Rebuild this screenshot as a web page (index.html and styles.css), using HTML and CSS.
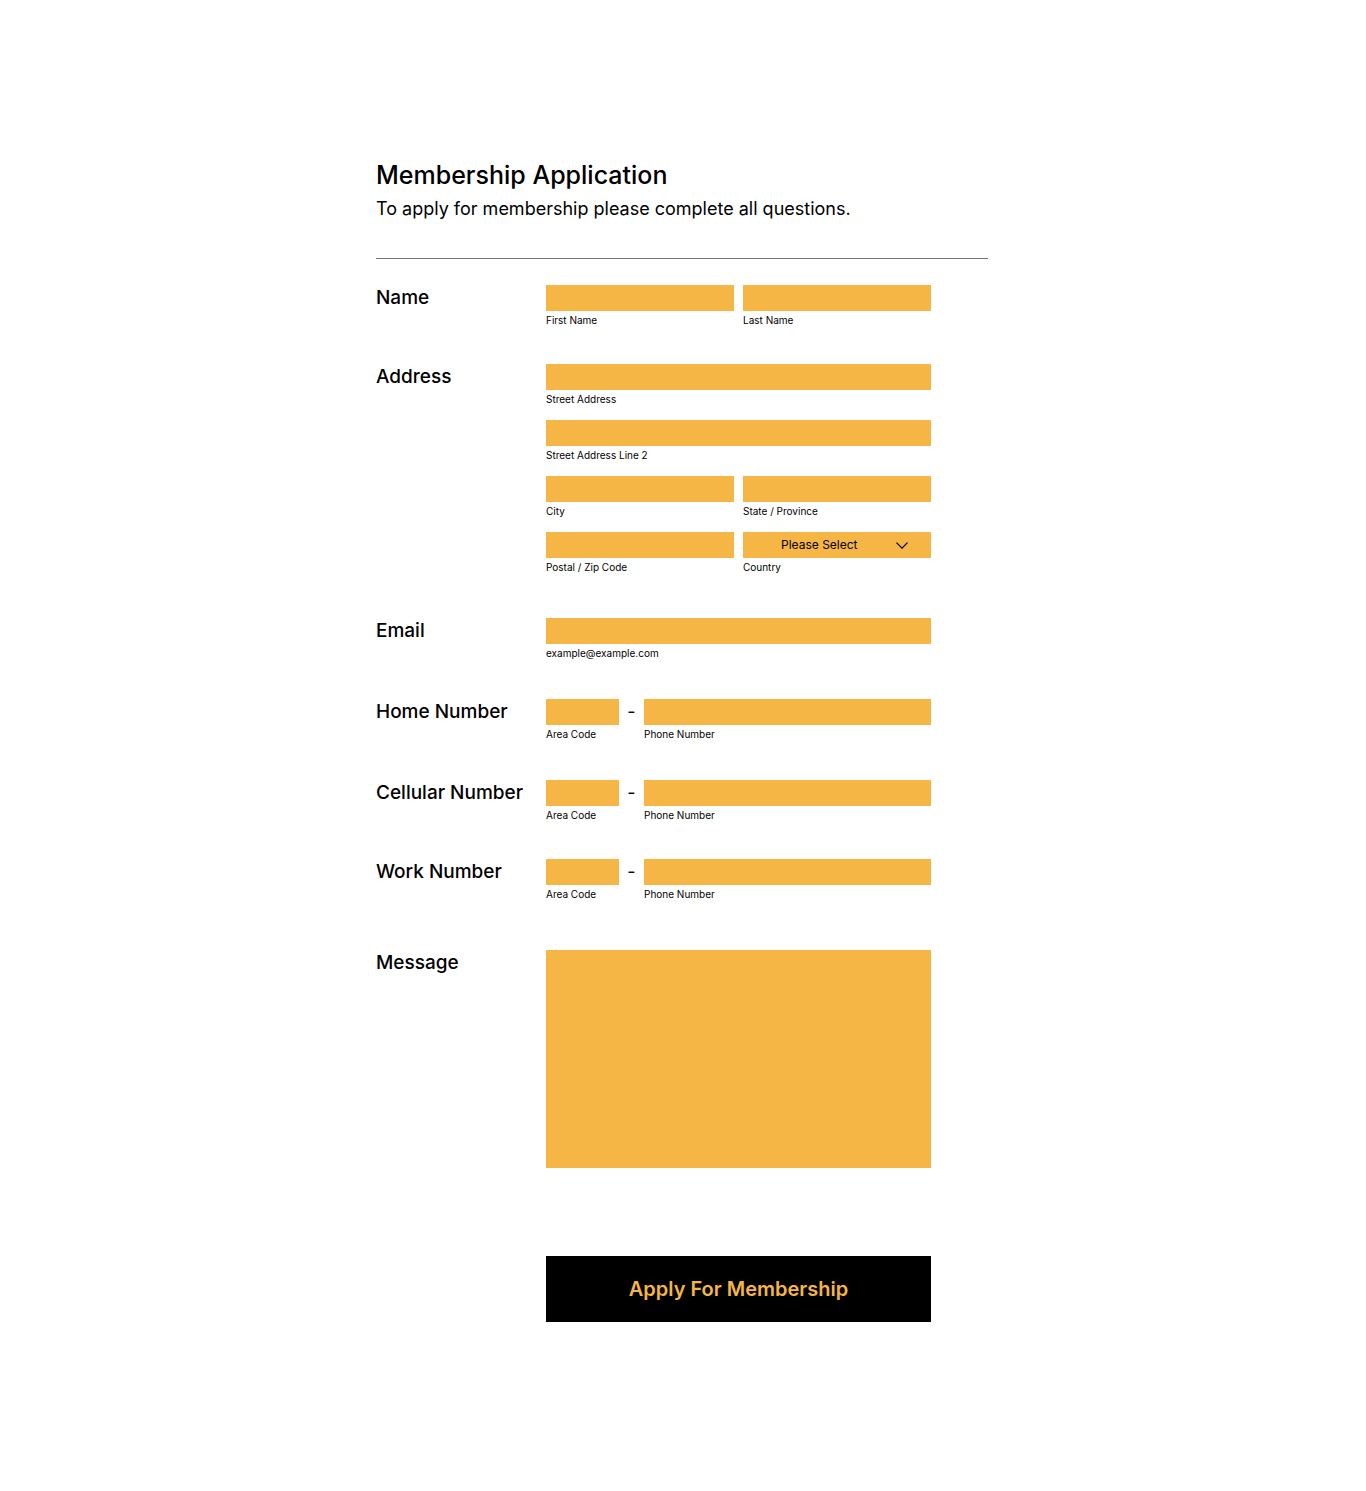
FILE: index.html
```html
<!DOCTYPE html>
<html lang="en">
<head>
<meta charset="utf-8">
<meta name="viewport" content="width=device-width, initial-scale=1">
<title>Membership Application</title>
<link rel="stylesheet" href="styles.css">
</head>
<body>
<main class="page">
  <header class="intro">
    <h1 class="title">Membership Application</h1>
    <p class="subtitle">To apply for membership please complete all questions.</p>
  </header>
  <form class="form">
    <div class="row" role="group" aria-labelledby="name">
      <span class="label" id="name">Name</span>
      <div class="fields halves">
        <div class="field"><input class="control" id="first" type="text"><label class="caption" for="first">First Name</label></div>
        <div class="field"><input class="control" id="last" type="text"><label class="caption" for="last">Last Name</label></div>
      </div>
    </div>
    <div class="row" role="group" aria-labelledby="address">
      <span class="label" id="address">Address</span>
      <div class="fields halves">
        <div class="field full"><input class="control" id="street" type="text"><label class="caption" for="street">Street Address</label></div>
        <div class="field full"><input class="control" id="street2" type="text"><label class="caption" for="street2">Street Address Line 2</label></div>
        <div class="field"><input class="control" id="city" type="text"><label class="caption" for="city">City</label></div>
        <div class="field"><input class="control" id="state" type="text"><label class="caption" for="state">State / Province</label></div>
        <div class="field"><input class="control" id="zip" type="text"><label class="caption" for="zip">Postal / Zip Code</label></div>
        <div class="field">
          <div class="select">
            <select class="control" id="country"><option>Please Select</option></select>
            <svg class="chevron" viewBox="0 0 12 7" aria-hidden="true"><path d="M0.5 0.6 6 6.1 11.5 0.6"/></svg>
          </div>
          <label class="caption" for="country">Country</label>
        </div>
      </div>
    </div>
    <div class="row row-email">
      <label class="label" for="email">Email</label>
      <div class="fields">
        <div class="field"><input class="control" id="email" type="email" aria-describedby="email-hint"><span class="caption" id="email-hint">example@example.com</span></div>
      </div>
    </div>
    <div class="row row-phone" role="group" aria-labelledby="home">
      <span class="label" id="home">Home Number</span>
      <div class="fields phone">
        <div class="field"><input class="control" id="home-area" type="tel"><label class="caption" for="home-area">Area Code</label></div>
        <span class="dash">-</span>
        <div class="field"><input class="control" id="home-phone" type="tel"><label class="caption" for="home-phone">Phone Number</label></div>
      </div>
    </div>
    <div class="row row-phone" role="group" aria-labelledby="cell">
      <span class="label" id="cell">Cellular Number</span>
      <div class="fields phone">
        <div class="field"><input class="control" id="cell-area" type="tel"><label class="caption" for="cell-area">Area Code</label></div>
        <span class="dash">-</span>
        <div class="field"><input class="control" id="cell-phone" type="tel"><label class="caption" for="cell-phone">Phone Number</label></div>
      </div>
    </div>
    <div class="row" role="group" aria-labelledby="work">
      <span class="label" id="work">Work Number</span>
      <div class="fields phone">
        <div class="field"><input class="control" id="work-area" type="tel"><label class="caption" for="work-area">Area Code</label></div>
        <span class="dash">-</span>
        <div class="field"><input class="control" id="work-phone" type="tel"><label class="caption" for="work-phone">Phone Number</label></div>
      </div>
    </div>
    <div class="row row-message">
      <label class="label" for="message">Message</label>
      <textarea class="control message" id="message"></textarea>
    </div>
    <div class="row row-submit">
      <button class="submit" type="submit">Apply For Membership</button>
    </div>
  </form>
</main>
</body>
</html>
```
FILE: styles.css
```css
* { box-sizing: border-box; }

body {
  margin: 0;
  background: #fff;
  color: #000;
  font-family: Inter, "Liberation Sans", sans-serif;
}

.page {
  max-width: 614px;
  margin: 0 auto;
  padding: 158px 2px 168px 0;
}

.intro {
  padding-bottom: 35px;
  border-bottom: 1px solid #757575;
}

.title {
  margin: 0;
  font-size: 25px;
  font-weight: 500;
  line-height: 34px;
}

.subtitle {
  margin: 0;
  padding-top: 3px;
  font-size: 18px;
  line-height: 28px;
}

.form {
  display: flex;
  flex-direction: column;
  gap: 37px;
  padding-top: 26px;
}

.row {
  display: grid;
  grid-template-columns: 170px minmax(0, 385px);
}

.row-email { margin-top: 7px; }
.row-phone { margin-top: 2px; }
.row-message { margin-top: 12px; }
.row-submit { margin-top: 51px; }

.label {
  font-size: 19px;
  font-weight: 500;
  line-height: 26px;
}

.fields {
  display: grid;
  gap: 14px 9px;
}

.halves { grid-template-columns: 1fr 1fr; }
.full { grid-column: 1 / -1; }

.phone {
  grid-template-columns: 73px 25px 1fr;
  column-gap: 0;
}

.field {
  display: flex;
  flex-direction: column;
  gap: 2px;
  min-width: 0;
}

.control {
  display: block;
  width: 100%;
  height: 26px;
  margin: 0;
  padding: 0 8px;
  border: 0;
  border-radius: 0;
  background: #f6b645;
  color: #000;
  font-family: inherit;
  font-size: 12px;
}

.caption {
  font-size: 10px;
  line-height: 14px;
}

.dash {
  font-size: 18px;
  line-height: 26px;
  text-align: center;
}

.select { position: relative; }

.select .control {
  appearance: none;
  padding: 0 38px 2px;
}

.chevron {
  position: absolute;
  top: 10px;
  right: 23px;
  width: 12px;
  height: 7px;
  fill: none;
  stroke: #000;
  stroke-width: 1.3;
  pointer-events: none;
}

.message {
  height: 218px;
  padding: 8px;
  resize: vertical;
}

.message::-webkit-resizer { display: none; }

.submit {
  grid-column: 2;
  height: 66px;
  padding: 0;
  border: 0;
  background: #000;
  color: #f6b645;
  font-family: inherit;
  font-size: 20px;
  font-weight: 600;
}

@media (max-width: 640px) {
  .page { padding: 48px 16px; }
  .row { grid-template-columns: 1fr; }
  .submit { grid-column: 1; }
}
```
